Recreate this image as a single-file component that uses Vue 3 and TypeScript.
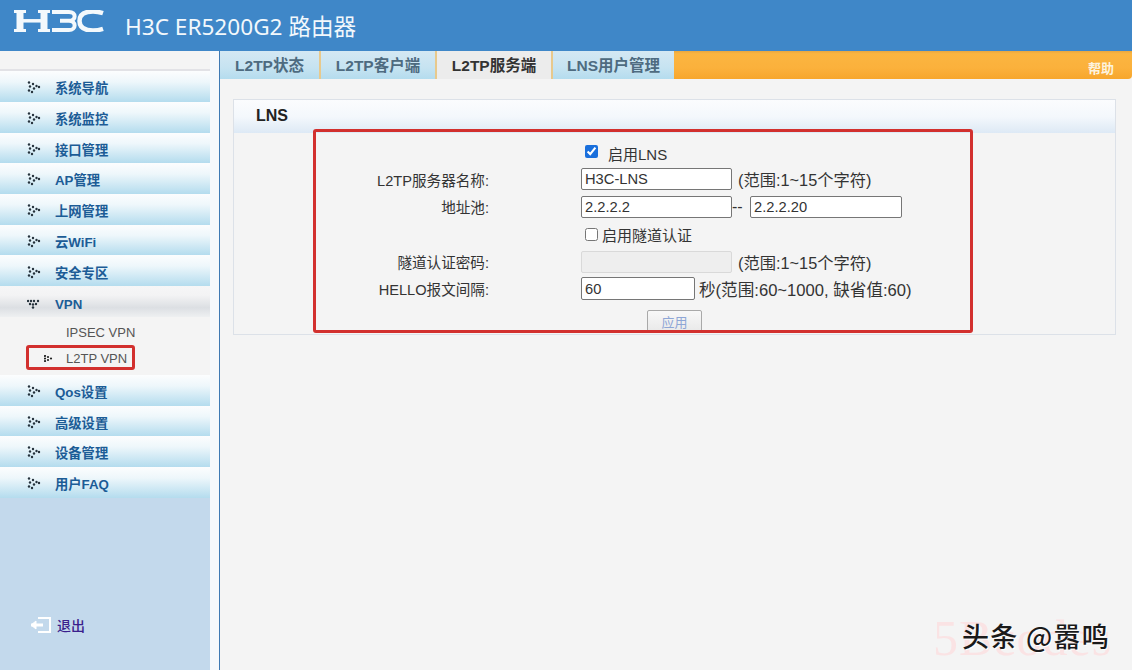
<script setup lang="ts">
interface MenuItem { label: string; open?: boolean }
const before: MenuItem[] = [
  { label: '系统导航' }, { label: '系统监控' }, { label: '接口管理' }, { label: 'AP管理' },
  { label: '上网管理' }, { label: '云WiFi' }, { label: '安全专区' },
]
const after: MenuItem[] = [
  { label: 'Qos设置' }, { label: '高级设置' }, { label: '设备管理' }, { label: '用户FAQ' },
]
const tabs = [
  { label: 'L2TP状态', w: 101 },
  { label: 'L2TP客户端', w: 116 },
  { label: 'L2TP服务端', w: 116, active: true },
  { label: 'LNS用户管理', w: 121 },
]
const dots = [[2,1.5],[6,3],[9.5,5],[12,6],[3,5.5],[7,7.5],[2,9.5],[5,11]]
const openDots = [[1,3],[4,3],[7,3],[11,3],[3,6],[6,6.5],[9,6],[6,9.5]]
const miniDots = [[1,1],[4,2],[7,3.5],[4,5],[1,6],[1,3.5]]
</script>

<template>
  <div class="page">
    <header class="top">
      <svg class="logo" width="90" height="22" viewBox="0 0 90 22" fill="none" stroke="#f4f9fc">
        <path d="M0 1.500h12M0 20.500h12M24 1.500h12M24 20.500h12" stroke-width="3" />
        <path d="M6 1v20M30 1v20" stroke-width="7" />
        <path d="M6 10.800h24" stroke-width="3.500" />
        <path d="M38 2h17c7.500 0 7.500 8.800 0 8.800h-9M55 10.800c7.500 0 7.500 9.200 0 9.200H38" stroke-width="4" />
        <path d="M89 3.200c-3-1-6.500-1.700-10-1.700-10 0-13.500 4-13.500 9.500s3.500 9.500 13.500 9.500c3.500 0 7-.7 10-1.700" stroke-width="4.500" />
      </svg>
      <h1 class="title">H3C ER5200G2 路由器</h1>
    </header>

    <div class="body">
      <aside class="side">
        <nav class="menu">
          <a v-for="m in before" :key="m.label" class="item">
            <svg class="dots" width="14" height="13" viewBox="0 0 14 13"><circle v-for="(d, i) in dots" :key="i" :cx="d[0]" :cy="d[1]" r="1.200" fill="#25323c" /></svg>
            {{ m.label }}
          </a>
          <a class="item open">
            <svg class="dots" width="14" height="13" viewBox="0 0 14 13"><circle v-for="(d, i) in openDots" :key="i" :cx="d[0]" :cy="d[1]" r="1.200" fill="#25323c" /></svg>
            VPN
          </a>
          <div class="subs">
            <div class="sub">IPSEC VPN</div>
            <div class="sub current">
              <svg class="mini" width="9" height="7" viewBox="0 0 9 7"><circle v-for="(d, i) in miniDots" :key="i" :cx="d[0]" :cy="d[1]" r="1.100" fill="#222" /></svg>
              L2TP VPN
            </div>
          </div>
          <a v-for="m in after" :key="m.label" class="item">
            <svg class="dots" width="14" height="13" viewBox="0 0 14 13"><circle v-for="(d, i) in dots" :key="i" :cx="d[0]" :cy="d[1]" r="1.200" fill="#25323c" /></svg>
            {{ m.label }}
          </a>
        </nav>
        <a class="logout">
          <svg width="22" height="18" viewBox="0 0 22 18" fill="none" stroke="#fff" stroke-width="2">
            <path d="M8 2h12v14H8" />
            <path d="M1 9h12" stroke-width="3" />
            <path d="M1 9l5-4v8z" fill="#fff" stroke-width="1" />
          </svg>
          退出
        </a>
      </aside>

      <div class="gutter"></div>

      <main class="main">
        <div class="tabs">
          <div v-for="t in tabs" :key="t.label" class="tab" :class="{ active: t.active }" :style="{ width: t.w + 'px' }">{{ t.label }}</div>
          <div class="helpbar"><span class="help">帮助</span></div>
        </div>

        <section class="card">
          <div class="card-head">LNS</div>
          <form class="form" @submit.prevent>
            <div class="row r1">
              <span class="label"></span>
              <label class="check first"><input type="checkbox" checked /><span>启用LNS</span></label>
            </div>
            <div class="row r2">
              <span class="label">L2TP服务器名称:</span>
              <input class="field" type="text" value="H3C-LNS" />
              <span class="hint">(范围:1~15个字符)</span>
            </div>
            <div class="row r3">
              <span class="label">地址池:</span>
              <input class="field" type="text" value="2.2.2.2" />
              <span class="dash">--</span>
              <input class="field wide" type="text" value="2.2.2.20" />
            </div>
            <div class="row r4">
              <span class="label"></span>
              <label class="check"><input type="checkbox" /><span>启用隧道认证</span></label>
            </div>
            <div class="row r5">
              <span class="label">隧道认证密码:</span>
              <input class="field" type="text" disabled />
              <span class="hint">(范围:1~15个字符)</span>
            </div>
            <div class="row r6">
              <span class="label">HELLO报文间隔:</span>
              <input class="field short" type="text" value="60" />
              <span class="sec">秒(范围:60~1000, 缺省值:60)</span>
            </div>
            <div class="actions"><button class="apply" type="button" disabled>应用</button></div>
          </form>
        </section>
      </main>
    </div>

    <div class="mark mark-form"></div>
    <div class="mark mark-nav"></div>
    <div class="wm-back">5Bcodes</div>
    <div class="wm-front">头条 @嚣鸣</div>
  </div>
</template>

<style>
html, body { margin: 0; padding: 0; overflow: hidden; }
</style>

<style scoped>
.page {
  position: relative;
  width: 1132px;
  height: 670px;
  overflow: hidden;
  display: flex;
  flex-direction: column;
  background: #f4f4f4;
  font-family: "Liberation Sans", "Noto Sans CJK SC", sans-serif;
  font-size: 14px;
  color: #333;
}
.top {
  height: 51px;
  flex: none;
  display: flex;
  align-items: center;
  background: #3f87c8;
  box-sizing: border-box;
  padding: 0 0 0 14px;
}
.logo { margin-top: -9px; }
.title {
  margin: 0 0 0 21px;
  font-family: "Noto Sans", "Noto Sans CJK SC", sans-serif;
  font-weight: 400;
  font-size: 22.600px;
  color: #f2f8fc;
  white-space: nowrap;
}
.body { flex: 1; display: flex; min-height: 0; }
.side {
  width: 210px;
  flex: none;
  display: flex;
  flex-direction: column;
  background: #c3d9ec;
}
.menu {
  background: #f4f4f4;
  padding-top: 18px;
}
.item {
  height: 30.700px;
  display: flex;
  align-items: center;
  box-sizing: border-box;
  padding: 2.500px 0 0 27px;
  background: linear-gradient(#fcfdfe 0%, #eef7fb 35%, #b4dcee 100%);
  font-size: 13.300px;
  font-weight: 700;
  color: #1c5c96;
}
.item:first-child { border-top: 2px solid #e2e2e6; height: 33px; padding-top: 1px; }
.item.open {
  padding-top: 6px;
  background: linear-gradient(#f6f6f7 0%, #f3f3f4 30%, #dcdfe3 70%, #eef0f1 100%);
}
.dots { margin-right: 14px; flex: none; }
.subs { box-sizing: border-box; padding-top: 2px; height: 58px; position: relative; }
.sub {
  height: 26px;
  display: flex;
  align-items: center;
  padding-left: 66px;
  font-size: 13px;
  color: #555;
  position: relative;
}
.subs .sub:first-child { height: 27px; }
.mini { position: absolute; left: 44px; top: 9px; }
.logout {
  margin: 117px 0 0 30px;
  display: flex;
  align-items: center;
  gap: 5px;
  font-size: 14px;
  font-weight: 500;
  color: #3a1f8c;
}
.gutter {
  width: 9px;
  flex: none;
  background: #f6f9fc;
  border-right: 1px solid #3f7ab4;
}
.main { flex: 1; min-width: 0; display: flex; flex-direction: column; }
.tabs { height: 28px; flex: none; display: flex; }
.tab {
  box-sizing: border-box;
  display: flex;
  align-items: center;
  justify-content: center;
  padding-bottom: 2px;
  font-weight: 700;
  font-size: 15.500px;
  color: #4e6b80;
  white-space: nowrap;
  background: linear-gradient(#d4e8f3 0%, #c6e3f1 60%, #b4dcee 100%);
  border-right: 2px solid #e8c98c;
}
.tab.active { background: #ececec; color: #333; }
.tab:nth-child(4) { border-right: 0; }
.helpbar {
  flex: 1;
  display: flex;
  justify-content: flex-end;
  align-items: flex-end;
  padding: 0 18px 2px 0;
  border-radius: 0 0 4px 0;
  background: linear-gradient(#e9a73f 0%, #fbb540 10%, #fbb13c 60%, #f7a62c 100%);
}
.help { font-size: 13px; font-weight: 700; color: #fdf3de; }
.card {
  margin: 20px 16px 0 13px;
  height: 236px;
  box-sizing: border-box;
  border: 1px solid #dce1e8;
  display: flex;
  flex-direction: column;
}
.card-head {
  height: 33px;
  flex: none;
  box-sizing: border-box;
  padding: 7px 0 0 22px;
  font-size: 16px;
  font-weight: 700;
  color: #222;
  background: linear-gradient(#fbfcfe 0%, #f4f8fc 50%, #dde9f5 100%);
}
.form { padding-top: 7px; }
.row { display: flex; align-items: center; }
.r1 { height: 26px; }
.r2 { height: 26px; }
.r3 { height: 29px; }
.r4 { height: 27px; }
.r5 { height: 27px; }
.r6 { height: 27px; }
.label {
  width: 255px;
  margin-right: 92px;
  flex: none;
  text-align: right;
  font-size: 14.600px;
  color: #333;
  white-space: nowrap;
}
.field {
  width: 151px;
  height: 22px;
  box-sizing: border-box;
  border: 1px solid #767676;
  border-radius: 2px;
  padding: 1px 3px;
  font: 14.700px "Liberation Sans", sans-serif;
  color: #333;
  background: #fff;
  outline: none;
}
.field:disabled { background: #eeeeee; border-color: #d9d9d9; }
.wide { width: 152px; }
.short { width: 114px; height: 23px; }
.hint { margin-left: 6px; font-size: 16.300px; color: #333; white-space: nowrap; }
.sec { margin-left: 4px; font-size: 16.600px; white-space: nowrap; }
.dash { width: 18px; flex: none; font-size: 16px; }
.check { display: flex; align-items: center; padding-left: 4px; font-size: 15px; }
.check input { width: 13px; height: 13px; margin: 0 4px 0 0; accent-color: #1a6fdc; }
.check.first input { margin: -3px 10px 0 0; }
.actions { padding: 8px 0 0 413px; }
.apply {
  width: 55px;
  height: 22px;
  box-sizing: border-box;
  border: 1px solid #a9a9a9;
  border-radius: 2px;
  padding: 0;
  background: linear-gradient(#f8f8f8, #e9e9e9);
  font: 13px "Liberation Sans", "Noto Sans CJK SC", sans-serif;
  color: #8ea6d6;
}
.mark {
  position: absolute;
  box-sizing: border-box;
  border: 3px solid #d2302e;
  border-radius: 3px;
  pointer-events: none;
}
.mark-form { left: 313px; top: 129px; width: 660px; height: 204px; }
.mark-nav { left: 26px; top: 345px; width: 109px; height: 25px; }
.wm-back {
  position: absolute;
  left: 933px;
  top: 613px;
  font-family: "Liberation Serif", serif;
  font-size: 50px;
  line-height: 50px;
  letter-spacing: 1px;
  color: #fae3e4;
  white-space: nowrap;
}
.wm-front {
  position: absolute;
  left: 962px;
  top: 618px;
  font-family: "Noto Sans CJK SC", sans-serif;
  font-size: 27px;
  font-weight: 500;
  line-height: 36px;
  letter-spacing: 1.300px;
  color: #1a1a1a;
  text-shadow: 1px 1px 0 #fff;
  white-space: nowrap;
}
</style>
